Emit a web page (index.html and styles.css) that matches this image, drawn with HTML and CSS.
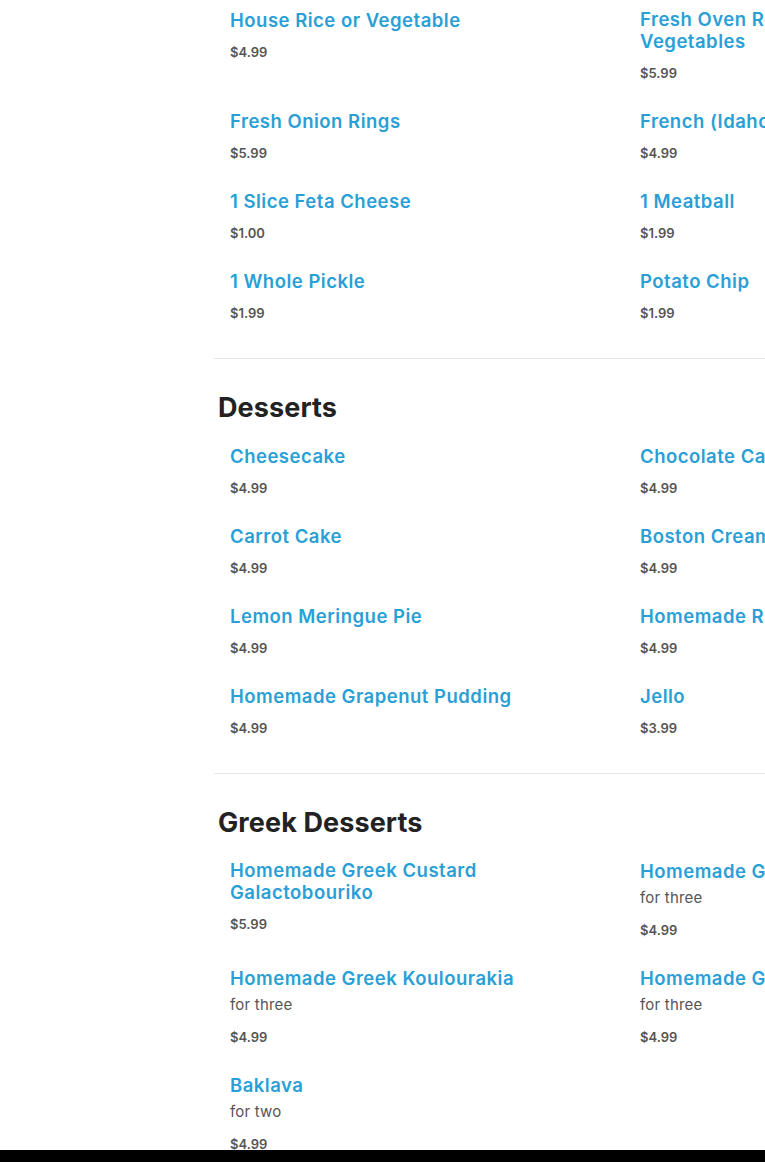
FILE: index.html
```html
<!DOCTYPE html>
<html lang="en">
<head>
<meta charset="utf-8">
<title>Menu</title>
<link rel="stylesheet" href="styles.css">
</head>
<body>
<main class="page">
  <section class="section section-first">
    <div class="items">
      <div class="item"><h3 class="name">House Rice or Vegetable</h3><div class="price">$4.99</div></div>
      <div class="item"><h3 class="name name-tight">Fresh Oven Roasted<br>Vegetables</h3><div class="price">$5.99</div></div>
      <div class="item"><h3 class="name">Fresh Onion Rings</h3><div class="price">$5.99</div></div>
      <div class="item"><h3 class="name">French (Idaho) Fries</h3><div class="price">$4.99</div></div>
      <div class="item"><h3 class="name">1 Slice Feta Cheese</h3><div class="price">$1.00</div></div>
      <div class="item"><h3 class="name">1 Meatball</h3><div class="price">$1.99</div></div>
      <div class="item"><h3 class="name">1 Whole Pickle</h3><div class="price">$1.99</div></div>
      <div class="item"><h3 class="name">Potato Chip</h3><div class="price">$1.99</div></div>
    </div>
  </section>

  <section class="section">
    <h2 class="section-title">Desserts</h2>
    <div class="items">
      <div class="item"><h3 class="name">Cheesecake</h3><div class="price">$4.99</div></div>
      <div class="item"><h3 class="name">Chocolate Cake</h3><div class="price">$4.99</div></div>
      <div class="item"><h3 class="name">Carrot Cake</h3><div class="price">$4.99</div></div>
      <div class="item"><h3 class="name">Boston Cream Pie</h3><div class="price">$4.99</div></div>
      <div class="item"><h3 class="name">Lemon Meringue Pie</h3><div class="price">$4.99</div></div>
      <div class="item"><h3 class="name">Homemade Rice Pudding</h3><div class="price">$4.99</div></div>
      <div class="item"><h3 class="name">Homemade Grapenut Pudding</h3><div class="price">$4.99</div></div>
      <div class="item"><h3 class="name">Jello</h3><div class="price">$3.99</div></div>
    </div>
  </section>

  <section class="section">
    <h2 class="section-title">Greek Desserts</h2>
    <div class="items">
      <div class="item"><h3 class="name name-tight">Homemade Greek Custard<br>Galactobouriko</h3><div class="price">$5.99</div></div>
      <div class="item"><h3 class="name">Homemade Greek Cookies</h3><p class="desc">for three</p><div class="price">$4.99</div></div>
      <div class="item"><h3 class="name">Homemade Greek Koulourakia</h3><p class="desc">for three</p><div class="price">$4.99</div></div>
      <div class="item"><h3 class="name">Homemade Greek Kourabiedes</h3><p class="desc">for three</p><div class="price">$4.99</div></div>
      <div class="item"><h3 class="name">Baklava</h3><p class="desc">for two</p><div class="price">$4.99</div></div>
    </div>
  </section>
</main>
<footer class="bottom-bar"></footer>
</body>
</html>
```

FILE: styles.css
```css
html, body {
  margin: 0;
  padding: 0;
  background: #ffffff;
  overflow: hidden;
}

body {
  font-family: "Inter", "Noto Sans", sans-serif;
  color: #555555;
}

.page {
  padding: 9px 0 0 214px;
  width: 830px;
}

.section {
  border-top: 1px solid #e6e6e6;
  margin-top: 8px;
}

.section-first {
  border-top: none;
  margin-top: 0;
}

.section-title {
  margin: 32px 0 20px 4px;
  font-size: 27px;
  line-height: 34px;
  font-weight: 700;
  color: #222222;
  letter-spacing: 0.1px;
}

.items {
  display: grid;
  grid-template-columns: 410px 410px;
}

.item {
  display: flex;
  flex-direction: column;
  align-items: flex-start;
  padding: 0 16px 26px 16px;
}

.name {
  margin: 0 0 4px 0;
  font-size: 18.5px;
  line-height: 22px;
  font-weight: 600;
  color: #2a9fd6;
  letter-spacing: 0.5px;
}

.name-tight {
  line-height: 21.5px;
}

.desc {
  margin: 1px 0 4px 0;
  font-size: 15px;
  line-height: 22px;
  color: #555555;
  letter-spacing: 0.2px;
}

.price {
  margin-top: 6px;
  font-size: 13px;
  line-height: 22px;
  font-weight: 600;
  color: #555555;
}

.bottom-bar {
  position: fixed;
  left: 0;
  right: 0;
  bottom: 0;
  height: 12px;
  background: #000000;
}
```
